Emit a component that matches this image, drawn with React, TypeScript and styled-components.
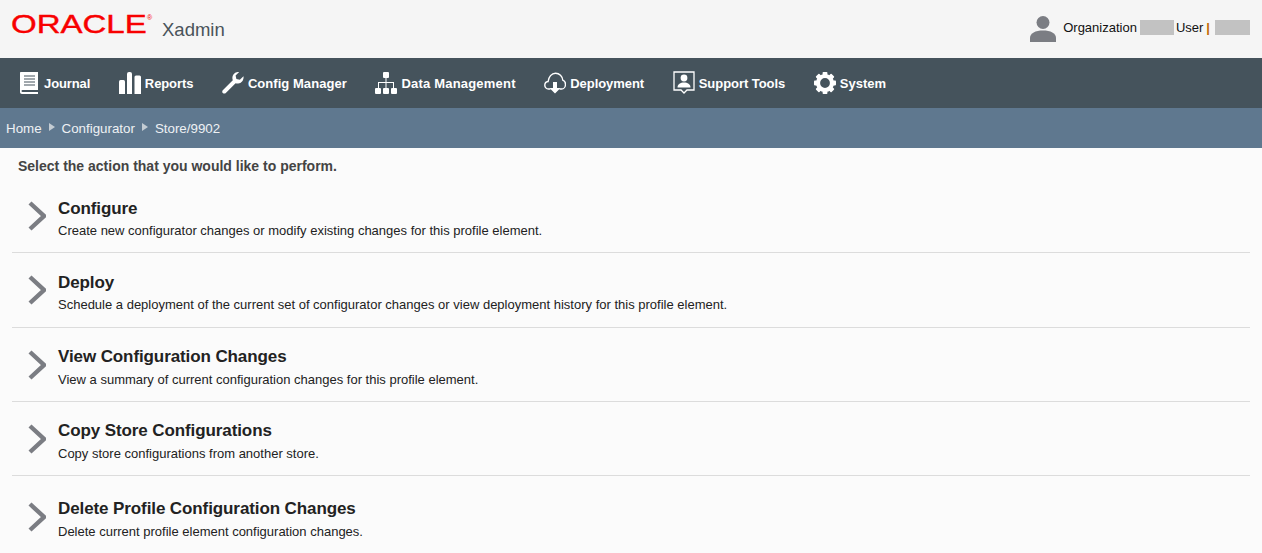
import React, {ReactNode} from 'react';
import styled, {createGlobalStyle} from 'styled-components';

const GlobalStyle = createGlobalStyle`
  html, body {
    margin: 0;
    padding: 0;
    background: #fbfbfb;
    font-family: "Liberation Sans", Arial, sans-serif;
  }
  * { box-sizing: border-box; }
`;

const Page = styled.div`
  width: 1262px;
  height: 553px;
  overflow: hidden;
`;

const TopBar = styled.header`
  height: 58px;
  background: #f5f5f5;
  display: flex;
  align-items: center;
  justify-content: space-between;
  padding: 0 12px 0 11px;
`;

const Brand = styled.div`
  display: flex;
  align-items: center;
`;

const Logo = styled.div`
  width: 151px;
  height: 58px;
  display: flex;
  align-items: flex-start;
  padding-top: 10px;
  color: #f80000;
  font-size: 25px;
  line-height: 28px;
  position: relative;
  > span {
    display: inline-block;
    transform: scaleX(1.32);
    transform-origin: left center;
    -webkit-text-stroke: 0.4px #f80000;
  }
  > i {
    position: absolute;
    left: 136px;
    top: 14px;
    font-size: 7px;
    line-height: 8px;
    font-style: normal;
  }
`;

const AppName = styled.div`
  font-size: 18.5px;
  color: #49535a;
  margin-top: 1px;
`;

const UserBox = styled.div`
  display: flex;
  align-items: center;
  font-size: 13px;
  color: #111;
`;

const UserText = styled.div`
  display: flex;
  align-items: center;
  margin-bottom: 4px;
`;

const Masked = styled.span<{$w: number}>`
  display: inline-block;
  width: ${p => p.$w}px;
  height: 15px;
  background: #c2c2c2;
`;

const OrgMask = styled(Masked)`
  margin: 0 2px 0 3px;
`;

const UserIcon = styled.svg`
  width: 26px;
  height: 26px;
  margin-right: 7px;
  fill: #7b7d83;
`;

const Pipe = styled.span`
  color: #c26a00;
  font-weight: bold;
  margin: 0 5px 0 3px;
`;

const Nav = styled.nav`
  height: 50px;
  background: #45535c;
  display: flex;
  align-items: center;
  gap: 28.6px;
  padding-left: 18px;
`;

const NavItem = styled.a`
  display: flex;
  align-items: center;
  gap: 4px;
  color: #fff;
  font-size: 13px;
  font-weight: bold;
  white-space: nowrap;
`;

const NavLabel = styled.span<{$track?: number}>`
  letter-spacing: ${p => p.$track ?? 0}px;
`;

const NavIcon = styled.span`
  width: 22px;
  height: 24px;
  display: flex;
  align-items: center;
  justify-content: center;
  color: #fff;
  svg { display: block; }
`;

const Crumbs = styled.div`
  height: 40px;
  background: #5f788f;
  display: flex;
  align-items: center;
  padding-left: 6px;
  color: #eef1f4;
  font-size: 13.33px;
`;

const CrumbArrow = styled.span`
  width: 0;
  height: 0;
  margin: 0 7px;
  border-left: 6px solid #c4ccd3;
  border-top: 4px solid transparent;
  border-bottom: 4px solid transparent;
  position: relative;
  top: -1px;
`;

const Content = styled.main`
  padding: 10px 12px 0;
`;

const Intro = styled.div`
  font-size: 14px;
  line-height: 16px;
  font-weight: bold;
  color: #444;
  padding-left: 6px;
  margin-bottom: 5px;
`;

const Row = styled.a<{$last?: boolean}>`
  display: flex;
  height: 74.3px;
  padding: ${p => (p.$last ? '23px' : '19.5px')} 0 0 16px;
  border-bottom: ${p => (p.$last ? 'none' : '1px solid #dcdcdc')};
`;

const Chevron = styled.svg`
  width: 18px;
  height: 30px;
  margin: 2.5px 12px 0 0;
  fill: none;
  stroke: #7b7d83;
  stroke-width: 4.4;
`;

const Title = styled.div`
  font-size: 17px;
  line-height: 20px;
  font-weight: bold;
  letter-spacing: -0.1px;
  color: #222;
`;

const Desc = styled.div`
  font-size: 13px;
  line-height: 16px;
  margin-top: 4.6px;
  color: #222;
`;

const BookIcon = () => (
  <svg width="18" height="22" viewBox="0 0 18 22">
    <path fill="#fff" d="M1 0h17v18H2.500a1 1 0 0 0 0 2H18v2H2c-1.200 0-2-.8-2-2V1c0-.6.4-1 1-1z"/>
    <path stroke="#45535c" strokeWidth="1.200" d="M4 4h11M4 7h11M4 10h11M4 13h11"/>
  </svg>
);

const BarsIcon = () => (
  <svg width="22" height="22" viewBox="0 0 22 22" fill="#fff">
    <path d="M0 9.500q0-1.500 1.500-1.500h3q1.500 0 1.500 1.500V22H0z"/>
    <path d="M8 2q0-2 2-2h1q2 0 2 2v20H8z"/>
    <path d="M15.500 5q0-1.500 1.500-1.500h3.500q1.500 0 1.500 1.500v17h-6.500z"/>
  </svg>
);

const WrenchIcon = () => (
  <svg width="22" height="22" viewBox="0 0 22 22" fill="#fff">
    <path d="M21.500 4.200L17.800 7.800 14.400 7l-.8-3.400L17.200 0C14-.4 10.600 2 10.400 5.600c-.1 1 .1 1.900.4 2.600L1 18c-1 1-1 2.200-.2 3 .8.800 2.200.8 3 0l9.800-9.800c.8.300 1.700.4 2.600.3 3.400-.3 5.800-3.500 5.300-7.300z"/>
  </svg>
);

const OrgIcon = () => (
  <svg width="22" height="22" viewBox="0 0 22 22" fill="#fff">
    <rect x="8" y="0" width="6" height="6" rx="1"/>
    <path d="M10.500 6h1v4H19v6h-1v-5h-6.500v5h-1v-5H4v5H3v-6h7.500z"/>
    <rect x="0" y="16" width="6" height="6" rx="1"/>
    <rect x="8" y="16" width="6" height="6" rx="1"/>
    <rect x="16" y="16" width="6" height="6" rx="1"/>
  </svg>
);

const CloudIcon = () => (
  <svg width="22" height="22" viewBox="0 0 22 22">
    <path fill="none" stroke="#fff" strokeWidth="1.400" strokeLinecap="round"
      d="M6 17H4.500C2.300 17 .8 15.300.8 13.200c0-2 1.400-3.500 3.300-3.700C4.600 5 7.600 1.200 11.500 1.200c3.900 0 7 3 7.300 7 1.700.5 2.700 2.300 2.700 4.200 0 2.500-1.800 4.600-4 4.600H16"/>
    <path fill="#fff" d="M9 10h4v6h3.500L11 21.500 5.500 16H9z"/>
  </svg>
);

const SupportIcon = () => (
  <svg width="22" height="24" viewBox="0 0 22 24">
    <path fill="none" stroke="#fff" strokeWidth="1.300" d="M1 1h20v18h-7l-3 3-3-3H1z"/>
    <circle cx="11" cy="7" r="3.400" fill="#fff"/>
    <path fill="#fff" d="M4.500 16.500c0-3.500 3-5 6.500-5s6.500 1.500 6.500 5z"/>
  </svg>
);

const GearIcon = () => (
  <svg width="22" height="22" viewBox="0 0 22 22" fill="#fff">
    {[0, 45, 90, 135, 180, 225, 270, 315].map(a =>
      <rect key={a} x="8.600" y="0" width="4.800" height="5" rx="0.8" transform={`rotate(${a} 11 11)`}/>
    )}
    <circle cx="11" cy="11" r="7" fill="none" stroke="#fff" strokeWidth="4.200"/>
  </svg>
);

const navItems: {label: string; icon: ReactNode; track?: number}[] = [
  {label: 'Journal', icon: <BookIcon/>, track: -0.1},
  {label: 'Reports', icon: <BarsIcon/>, track: -0.1},
  {label: 'Config Manager', icon: <WrenchIcon/>, track: 0.05},
  {label: 'Data Management', icon: <OrgIcon/>, track: 0.2},
  {label: 'Deployment', icon: <CloudIcon/>, track: -0.05},
  {label: 'Support Tools', icon: <SupportIcon/>, track: -0.05},
  {label: 'System', icon: <GearIcon/>},
];

const actions = [
  {title: 'Configure', desc: 'Create new configurator changes or modify existing changes for this profile element.'},
  {title: 'Deploy', desc: 'Schedule a deployment of the current set of configurator changes or view deployment history for this profile element.'},
  {title: 'View Configuration Changes', desc: 'View a summary of current configuration changes for this profile element.'},
  {title: 'Copy Store Configurations', desc: 'Copy store configurations from another store.'},
  {title: 'Delete Profile Configuration Changes', desc: 'Delete current profile element configuration changes.'},
];

function App() {
  return (
    <Page>
      <GlobalStyle/>
      <TopBar>
        <Brand>
          <Logo><span>ORACLE</span><i>®</i></Logo>
          <AppName>Xadmin</AppName>
        </Brand>
        <UserBox>
          <UserIcon viewBox="0 0 26 26">
            <circle cx="13" cy="6.500" r="6.500"/>
            <path d="M0 26v-4c0-5 5.500-7.500 13-7.500S26 17 26 22v4z"/>
          </UserIcon>
          <UserText>
            <span>Organization</span>
            <OrgMask $w={34}/>
            <span>User</span>
            <Pipe>|</Pipe>
            <Masked $w={35}/>
          </UserText>
        </UserBox>
      </TopBar>
      <Nav>
        {navItems.map(item =>
          <NavItem key={item.label}>
            <NavIcon>{item.icon}</NavIcon>
            <NavLabel $track={item.track}>{item.label}</NavLabel>
          </NavItem>
        )}
      </Nav>
      <Crumbs>
        <span>Home</span>
        <CrumbArrow/>
        <span>Configurator</span>
        <CrumbArrow/>
        <span>Store/9902</span>
      </Crumbs>
      <Content>
        <Intro>Select the action that you would like to perform.</Intro>
        {actions.map((a, index) =>
          <Row key={a.title} $last={index === actions.length - 1}>
            <Chevron viewBox="0 0 18 30"><path d="M2 2l14 13L2 28"/></Chevron>
            <div>
              <Title>{a.title}</Title>
              <Desc>{a.desc}</Desc>
            </div>
          </Row>
        )}
      </Content>
    </Page>
  );
}

export default App;
